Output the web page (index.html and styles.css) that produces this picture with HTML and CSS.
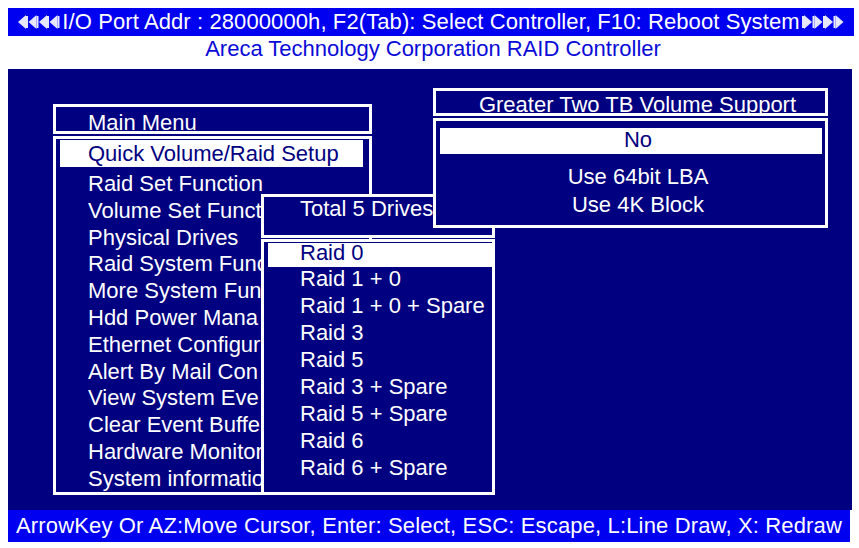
FILE: index.html
```html
<!DOCTYPE html>
<html>
<head>
    <title>Areca RAID Controller</title>
    <link rel="stylesheet" href="styles.css">
</head>
<body>
<div class="screen">
    <div class="topbar">
        <svg class="arrows" width="42" height="16" viewBox="0 0 42 16">
            <g fill="#e6e6ff">
                <polygon points="0,8 8,1 8,15"/><rect x="8" y="2" width="2" height="12"/>
                <polygon points="10.5,8 18.5,1 18.5,15"/><rect x="18.5" y="2" width="2" height="12"/>
                <polygon points="21,8 29,1 29,15"/><rect x="29" y="2" width="2" height="12"/>
                <polygon points="31.5,8 39.5,1 39.5,15"/><rect x="39.5" y="2" width="2" height="12"/>
            </g>
        </svg>
        <span class="toptext">I/O Port Addr : 28000000h, F2(Tab): Select Controller, F10: Reboot System</span>
        <svg class="arrows" width="42" height="16" viewBox="0 0 42 16">
            <g fill="#e6e6ff">
                <rect x="0" y="2" width="2" height="12"/><polygon points="2,1 10,8 2,15"/>
                <rect x="10.5" y="2" width="2" height="12"/><polygon points="12.5,1 20.5,8 12.5,15"/>
                <rect x="21" y="2" width="2" height="12"/><polygon points="23,1 31,8 23,15"/>
                <rect x="31.5" y="2" width="2" height="12"/><polygon points="33.5,1 41.5,8 33.5,15"/>
            </g>
        </svg>
    </div>
    <div class="subtitle">Areca Technology Corporation RAID Controller</div>

    <div class="desk">
        <div class="win main">
            <div class="box head">Main Menu</div>
            <div class="box list">
                <div class="item sel">Quick Volume/Raid Setup</div>
                <div class="item">Raid Set Function</div>
                <div class="item">Volume Set Funct</div>
                <div class="item">Physical Drives</div>
                <div class="item">Raid System Func</div>
                <div class="item">More System Fun</div>
                <div class="item">Hdd Power Mana</div>
                <div class="item">Ethernet Configur</div>
                <div class="item">Alert By Mail Con</div>
                <div class="item">View System Eve</div>
                <div class="item">Clear Event Buffe</div>
                <div class="item">Hardware Monitor</div>
                <div class="item">System informatio</div>
            </div>
        </div>

        <div class="win total">
            <div class="box head">Total 5 Drives</div>
            <div class="box list">
                <div class="item sel">Raid 0</div>
                <div class="item">Raid 1 + 0</div>
                <div class="item">Raid 1 + 0 + Spare</div>
                <div class="item">Raid 3</div>
                <div class="item">Raid 5</div>
                <div class="item">Raid 3 + Spare</div>
                <div class="item">Raid 5 + Spare</div>
                <div class="item">Raid 6</div>
                <div class="item">Raid 6 + Spare</div>
            </div>
        </div>

        <div class="win greater">
            <div class="box head">Greater Two TB Volume Support</div>
            <div class="box list">
                <div class="item sel">No</div>
                <div class="item">Use 64bit LBA</div>
                <div class="item">Use 4K Block</div>
            </div>
        </div>
    </div>

    <div class="bottombar">ArrowKey Or AZ:Move Cursor, Enter: Select, ESC: Escape, L:Line Draw, X: Redraw</div>
</div>
</body>
</html>
```

FILE: styles.css
```css
body{
    margin:0;
    background:#fff;
    font:22px "Liberation Sans", Arial, sans-serif;
}
.screen{
    width:846px;
    margin:8px 0 0 8px;
}
.topbar{
    height:28px;
    background:#0000f0;
    color:#fff;
    display:flex;
    align-items:center;
    justify-content:center;
    gap:2px;
    white-space:nowrap;
    letter-spacing:0.1px;
}
.subtitle{
    height:33px;
    line-height:26px;
    text-align:center;
    color:#0a0ad8;
    padding-left:4px;
}
.desk{
    position:relative;
    height:441px;
    width:844px;
    background:#000080;
    color:#fff;
}
.bottombar{
    width:842px;
    height:32px;
    line-height:32px;
    background:#0000f0;
    color:#fff;
    text-align:center;
    white-space:nowrap;
    letter-spacing:0.15px;
}

/* menu windows */
.win{
    position:absolute;
}
.box{
    box-sizing:border-box;
    border:3px solid #fff;
    background:#000080;
    white-space:nowrap;
    overflow:hidden;
}
.item.sel{
    background:#fff;
    color:#000080;
}

.main{
    left:45px;
    top:35px;
    width:319px;
    z-index:1;
}
.main .head{
    height:30px;
    padding:4px 0 0 32px;
    line-height:24px;
}
.main .list{
    height:359px;
    margin-top:2px;
    padding:1px 6px 0 4px;
}
.main .item{
    line-height:26.8px;
    padding-left:28px;
}
.main .item.sel{
    line-height:27px;
    margin-bottom:4px;
}

.total{
    left:253px;
    top:125px;
    width:234px;
    z-index:2;
}
.total .head{
    height:44px;
    padding-left:36px;
    line-height:24px;
}
.total .list{
    height:256px;
    margin-top:1px;
    padding:1px 0 0 4px;
}
.total .item{
    line-height:27px;
    padding-left:32px;
}
.total .item.sel{
    height:22px;
    line-height:20px;
    box-shadow:0 2px 0 #fff;
}

.greater{
    left:425px;
    top:19px;
    width:395px;
    z-index:3;
    text-align:center;
}
.greater .head{
    height:28px;
    padding:4px 0 0 14px;
    line-height:20px;
}
.greater .list{
    height:110px;
    margin-top:2px;
    padding:7px 3px 0 4px;
}
.greater .item{
    line-height:28px;
    padding-left:14px;
}
.greater .item.sel{
    height:26px;
    line-height:24px;
    margin-bottom:9px;
}
```
